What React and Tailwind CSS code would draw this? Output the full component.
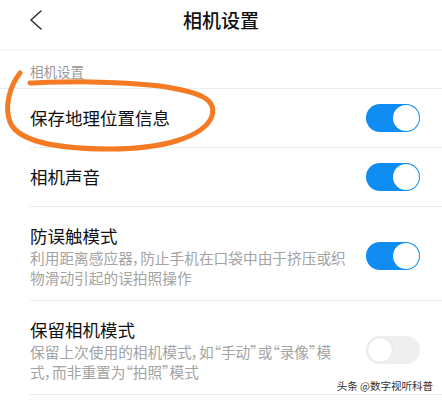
import React from "react";

const font = { fontFamily: '"Noto Sans CJK SC", "Noto Sans", sans-serif' };

function Toggle({ on }) {
  if (on) {
    return (
      <div className="w-[54px] h-[28px] rounded-full bg-[#0e8cf2] flex items-center justify-end pr-[1px] shrink-0">
        <div className="w-[26px] h-[26px] rounded-full bg-white"></div>
      </div>
    );
  }
  return (
    <div className="w-[54px] h-[28px] rounded-full bg-[#efefef] flex items-center justify-start pl-[1px] shrink-0">
      <div className="w-[26px] h-[26px] rounded-full bg-white border border-[#e4e4e4]"></div>
    </div>
  );
}

function SimpleRow({ title, on }) {
  return (
    <div className="ml-[30px] pr-[22px] h-[59px] border-b border-[#ececec] flex items-center justify-between">
      <div className="text-[17.5px] leading-[24px] text-[#111]">{title}</div>
      <Toggle on={on} />
    </div>
  );
}

function DescRow({ title, lines, on }) {
  return (
    <div className="ml-[30px] pr-[22px] pt-[17px] pb-[13px] border-b border-[#ececec] flex items-center justify-between">
      <div className="flex flex-col">
        <div className="text-[17.5px] leading-[24px] text-[#111]">{title}</div>
        {lines.map((l, i) => (
          <div key={i} className="text-[14.7px] leading-[19.5px] text-[#a3a3a3] whitespace-nowrap [font-feature-settings:'palt']">{l}</div>
        ))}
      </div>
      <Toggle on={on} />
    </div>
  );
}

export default function App() {
  return (
    <div className="relative w-[442px] h-[400px] bg-white overflow-hidden" style={font}>
      <div className="h-[51px] grid grid-cols-[1fr_auto_1fr] items-start pt-[8px] border-b-2 border-[#f6f6f6]">
        <div className="pl-[29px] pt-[2px]">
          <svg width="14" height="20" viewBox="0 0 14 20" fill="none">
            <path d="M12 1 L2 10 L12 19" stroke="#333" strokeWidth="1.6" strokeLinecap="round" strokeLinejoin="round" />
          </svg>
        </div>
        <div className="text-[19px] leading-[24px] font-medium text-[#111]">相机设置</div>
        <div></div>
      </div>
      <div className="pl-[30px] pt-[11px] pb-[8px] border-b border-[#ececec]">
        <div className="text-[13.5px] leading-[18px] text-[#999]">相机设置</div>
      </div>
      <SimpleRow title="保存地理位置信息" on />
      <SimpleRow title="相机声音" on />
      <DescRow
        title="防误触模式"
        lines={["利用距离感应器，防止手机在口袋中由于挤压或织", "物滑动引起的误拍照操作"]}
        on
      />
      <DescRow
        title="保留相机模式"
        lines={["保留上次使用的相机模式，如“手动”或“录像”模", "式，而非重置为“拍照”模式"]}
        on={false}
      />
      <div className="absolute right-[9px] top-[378px] text-[10.5px] leading-[16px] text-[#333]">头条 @数字视听科普</div>
      <svg className="absolute left-0 top-0 pointer-events-none" width="442" height="400" viewBox="0 0 442 400" fill="none">
        <path
          d="M20 73 C10 86 4 106 10 122 C18 142 60 149 110 149 C160 149 204 138 212 116 C217 99 200 92 160 86 C110 80 60 82 30 83"
          stroke="#f47a24"
          strokeWidth="5"
          strokeLinecap="round"
          strokeLinejoin="round"
        />
      </svg>
    </div>
  );
}
